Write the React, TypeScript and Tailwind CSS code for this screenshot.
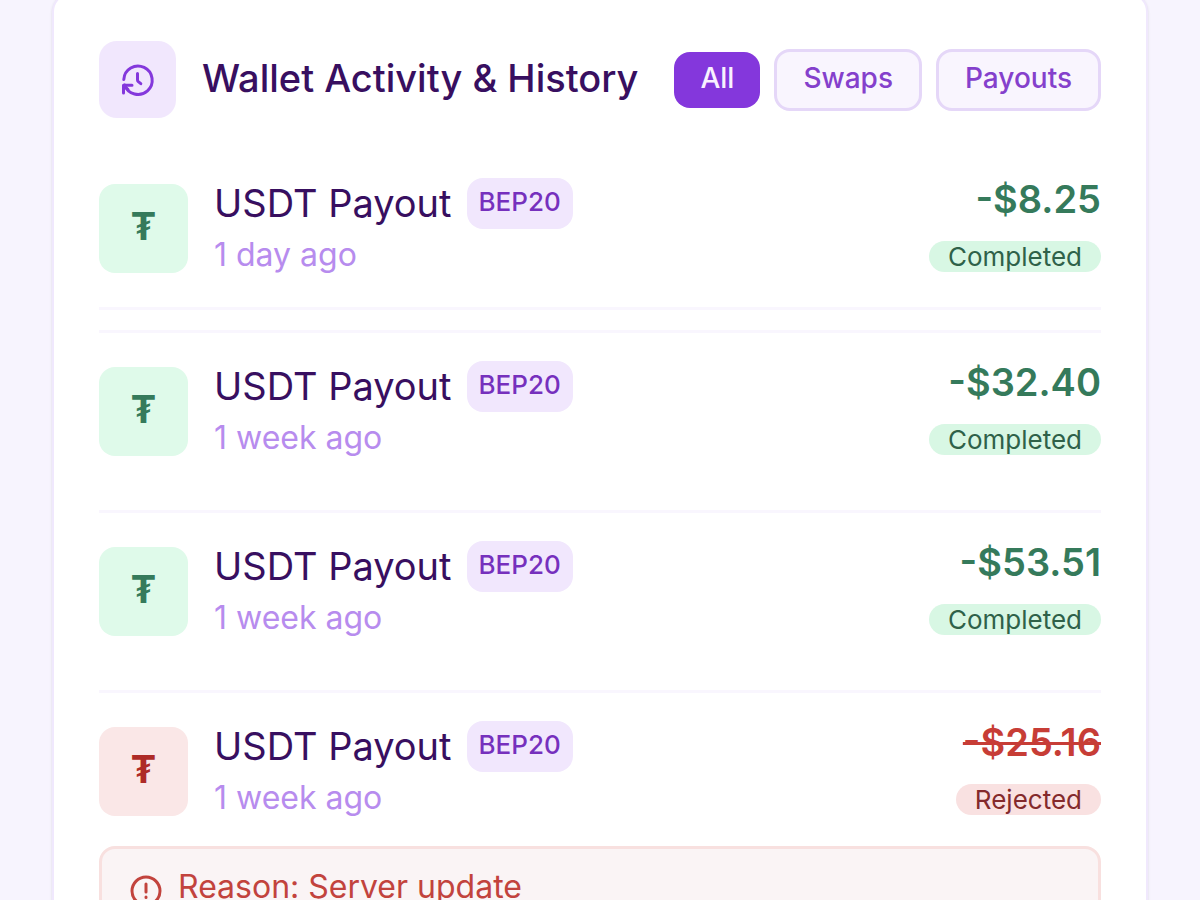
import { useState } from 'react'

type Filter = 'All' | 'Swaps' | 'Payouts'
type Status = 'Completed' | 'Rejected'

interface Transaction {
  id: number
  kind: Filter
  title: string
  network: string
  time: string
  amount: string
  status: Status
  reason?: string
}

const FILTERS: Filter[] = ['All', 'Swaps', 'Payouts']

const TRANSACTIONS: Transaction[] = [
  { id: 1, kind: 'Payouts', title: 'USDT Payout', network: 'BEP20', time: '1 day ago', amount: '-$8.25', status: 'Completed' },
  { id: 2, kind: 'Payouts', title: 'USDT Payout', network: 'BEP20', time: '1 week ago', amount: '-$32.40', status: 'Completed' },
  { id: 3, kind: 'Payouts', title: 'USDT Payout', network: 'BEP20', time: '1 week ago', amount: '-$53.51', status: 'Completed' },
  { id: 4, kind: 'Payouts', title: 'USDT Payout', network: 'BEP20', time: '1 week ago', amount: '-$25.16', status: 'Rejected', reason: 'Server update' },
]

export default function App() {
  const [filter, setFilter] = useState<Filter>('All')
  const visible = TRANSACTIONS.filter(t => filter === 'All' || t.kind === filter)

  return (
    <div className="h-screen overflow-hidden bg-[#f7f4fe] px-[52px] font-['Inter',sans-serif]">
      <main className="-mt-2 min-h-[120vh] rounded-[20px] border-2 border-[#f0e8fd] bg-white px-[45px] pt-[47px] shadow-sm">
        <header className="flex items-center justify-between">
          <div className="flex items-center gap-[26px]">
            <div className="flex size-[77px] items-center justify-center rounded-[18px] bg-[#f1e7fd] text-[#8438dc]">
              <HistoryIcon />
            </div>
            <h1 className="pb-1 text-[38px] leading-[48px] font-medium whitespace-nowrap text-[#380f60]">Wallet Activity &amp; History</h1>
          </div>
          <div className="flex items-center gap-[14px]">
            {FILTERS.map(f => (
              <button
                key={f}
                onClick={() => setFilter(f)}
                className={
                  f === filter
                    ? 'h-14 rounded-2xl bg-[#8437dc] px-[26px] pb-1 text-[28px] font-medium text-[#f8f1ff]'
                    : 'h-[62px] rounded-2xl border-3 border-[#e5d7f8] bg-[#f9f5fe] px-[26px] pb-1 text-[28px] font-medium text-[#8540cc]'
                }
              >
                {f}
              </button>
            ))}
          </div>
        </header>

        <ul className="mt-8 flex flex-col gap-5">
          {visible.map(t => (
            <TransactionRow key={t.id} tx={t} />
          ))}
        </ul>
      </main>
    </div>
  )
}

function TransactionRow({ tx }: { tx: Transaction }) {
  const rejected = tx.status === 'Rejected'

  return (
    <li className="border-t-3 border-[#f9f6fe] py-[34px] first:border-t-0 first:border-b-3">
      <div className="flex h-[89px] items-center justify-between">
        <div className="flex items-center gap-[26px]">
          <div
            className={
              rejected
                ? 'flex size-[89px] items-center justify-center rounded-2xl bg-[#fae7e7] pb-1 text-[38px] font-bold text-[#ae2b27]'
                : 'flex size-[89px] items-center justify-center rounded-2xl bg-[#dffaea] pb-1 text-[38px] font-bold text-[#357a5b]'
            }
          >
            ₮
          </div>
          <div>
            <div className="flex items-center gap-[15px]">
              <span className="text-[38px] leading-[51px] text-[#380f60]">{tx.title}</span>
              <span className="rounded-2xl bg-[#f1e7fd] px-3 pt-1 pb-2 text-[26px] leading-[39px] font-medium text-[#7630bd]">
                {tx.network}
              </span>
            </div>
            <p className="text-[32px] leading-[51px] text-[#b78cee]">{tx.time}</p>
          </div>
        </div>
        <div className="flex flex-col items-end gap-[26px] pb-0.5">
          <span
            className={
              rejected
                ? 'text-[38px] leading-8 font-semibold text-[#c73d36] line-through'
                : 'text-[38px] leading-8 font-semibold text-[#357a5b]'
            }
          >
            {tx.amount}
          </span>
          <span
            className={
              rejected
                ? 'rounded-full bg-[#f9e1e1] px-[19px] text-[26px] leading-[31px] text-[#842a2c]'
                : 'rounded-full bg-[#d8f7e4] px-[19px] text-[26px] leading-[31px] text-[#2f6149]'
            }
          >
            {tx.status}
          </span>
        </div>
      </div>
      {tx.reason && (
        <div className="mt-[30px] flex items-end gap-4 rounded-2xl border-3 border-[#f8e0df] bg-[#faf4f5] px-7 py-[18px] text-[#c2433d]">
          <AlertIcon />
          <p className="text-[32px] leading-10">Reason: {tx.reason}</p>
        </div>
      )}
    </li>
  )
}

function HistoryIcon() {
  return (
    <svg className="size-9" viewBox="0 0 36 36" fill="none" stroke="currentColor" strokeWidth="3" strokeLinecap="round" strokeLinejoin="round" aria-hidden="true">
      <path d="M3.800 17.500A14.200 14.200 0 1 1 4.600 23" />
      <path d="M3.500 31V23.200H12" />
      <path d="M4.500 24.200L8 27.500" />
      <path d="M17.500 11.500V18Q17.500 19 18.300 19.700L20.800 21.700" />
    </svg>
  )
}

function AlertIcon() {
  return (
    <svg className="size-8" viewBox="0 0 32 32" fill="none" stroke="currentColor" strokeWidth="3" strokeLinecap="round" aria-hidden="true">
      <circle cx="16" cy="16" r="14" />
      <path d="M16 9v8M16 22v0.500" />
    </svg>
  )
}
